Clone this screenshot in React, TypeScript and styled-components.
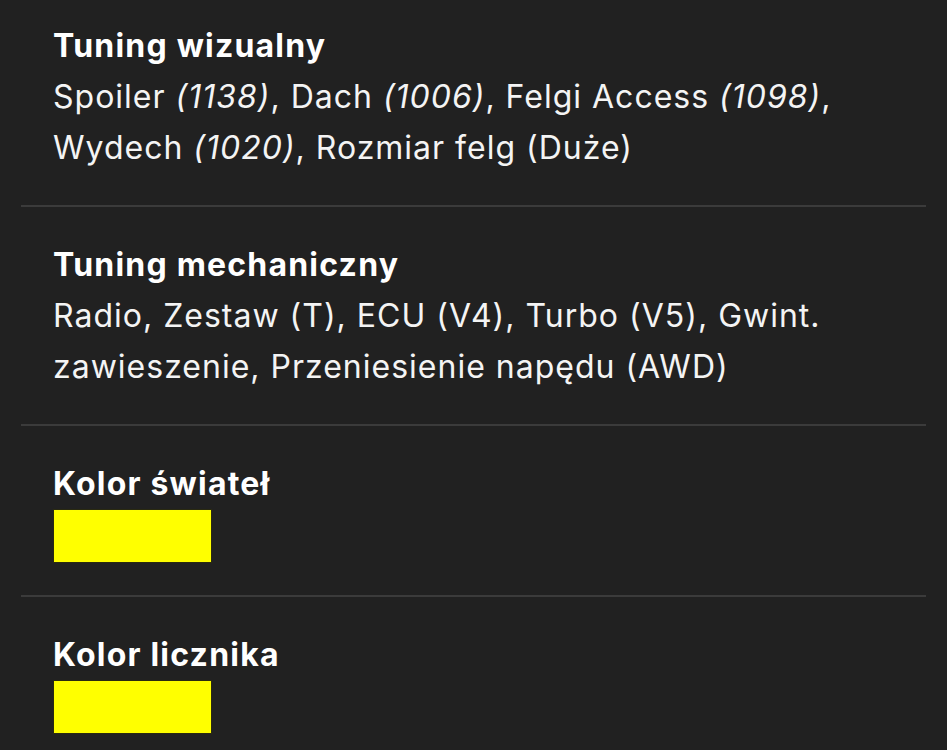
import React from "react";
import styled, { createGlobalStyle } from "styled-components";

const GlobalStyle = createGlobalStyle`
  html, body {
    margin: 0;
    padding: 0;
    background: #212121;
  }
  body {
    font-family: Inter, "Noto Sans", "Liberation Sans", sans-serif;
    color: #ffffff;
    -webkit-font-smoothing: antialiased;
  }
`;

const Sheet = styled.div`
  padding: 0 21px;
  background: #212121;
  min-height: 100vh;
`;

const Section = styled.section`
  padding: 32px 32px;
  border-bottom: 2px solid #3b3b3b;

  &:first-child {
    padding-top: 20px;
  }
`;

const Title = styled.h3`
  margin: 0;
  font-size: 32px;
  line-height: 51px;
  font-weight: 700;
  color: #ffffff;
  letter-spacing: 1.2px;
`;

const Body = styled.p`
  margin: 0;
  font-size: 32px;
  line-height: 51px;
  font-weight: 400;
  color: #f4f4f4;
  letter-spacing: 1px;
`;

const Code = styled.em`
  font-style: italic;
`;

const Swatch = styled.div<{ $color: string }>`
  width: 157px;
  height: 52px;
  background: ${(p) => p.$color};
  border: 1px solid #2a2a10;
`;

type Part = { name: string; code?: string; extra?: string };

const visual: Part[] = [
  { name: "Spoiler", code: "1138" },
  { name: "Dach", code: "1006" },
  { name: "Felgi Access", code: "1098" },
  { name: "Wydech", code: "1020" },
  { name: "Rozmiar felg", extra: "Duże" },
];

const mechanical = [
  "Radio",
  "Zestaw (T)",
  "ECU (V4)",
  "Turbo (V5)",
  "Gwint. zawieszenie",
  "Przeniesienie napędu (AWD)",
];

export default function App() {
  return (
    <>
      <GlobalStyle />
      <Sheet>
        <Section>
          <Title>Tuning wizualny</Title>
          <Body>
            {visual.map((p, i) => (
              <React.Fragment key={p.name}>
                {p.name}
                {p.code && (
                  <>
                    {" "}
                    <Code>({p.code})</Code>
                  </>
                )}
                {p.extra && ` (${p.extra})`}
                {i < visual.length - 1 && ", "}
              </React.Fragment>
            ))}
          </Body>
        </Section>
        <Section>
          <Title>Tuning mechaniczny</Title>
          <Body>{mechanical.join(", ")}</Body>
        </Section>
        <Section>
          <Title>Kolor świateł</Title>
          <Swatch $color="#ffff00" />
        </Section>
        <Section>
          <Title>Kolor licznika</Title>
          <Swatch $color="#ffff00" />
        </Section>
      </Sheet>
    </>
  );
}
